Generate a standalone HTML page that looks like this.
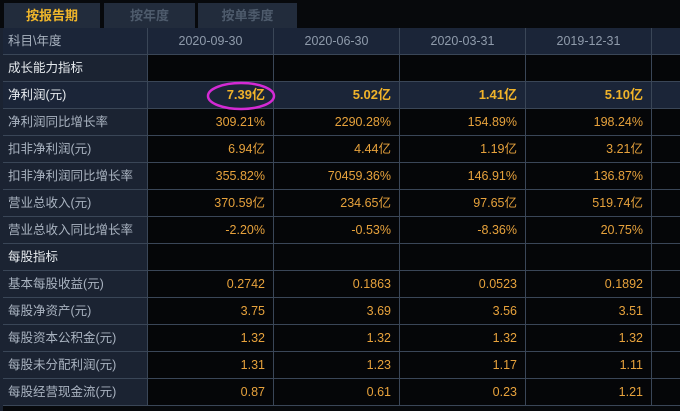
<!DOCTYPE html><html><head><meta charset="utf-8"><style>
body{margin:0;width:680px;height:411px;background:#07090c;overflow:hidden;position:relative;font-family:"Liberation Sans","Noto Sans CJK SC",sans-serif;font-size:12.5px}
.tab{position:absolute;top:3px;height:25px;background:#222c3c;color:#4e5b6c;font-weight:bold;font-size:13px;text-align:center;line-height:25px}
.r{position:absolute;left:3px;width:677px;height:26px;border-bottom:1px solid #3a4657}
.c{position:absolute;top:0;height:26px;line-height:26px;border-right:1px solid #3a4657;box-sizing:border-box}
.l{left:0;width:145px;background:#1b2332;color:#a9b3c0;padding-left:5px}
.d{text-align:right;padding-right:8px;color:#e7a23c;width:126px}
</style></head><body>
<div class="tab" style="left:4px;width:96px;color:#f0b62a">按报告期</div>
<div class="tab" style="left:104px;width:91px">按年度</div>
<div class="tab" style="left:198px;width:99px">按单季度</div>
<div style="position:absolute;top:28px;left:0;width:3px;height:383px;background:#1b2332"></div>
<div id="t"></div>
<svg style="position:absolute;left:0;top:0" width="680" height="411"><ellipse cx="241" cy="96" rx="33" ry="13" fill="none" stroke="#d42ad4" stroke-width="2.5"/></svg>
<script>
var rows=[["科目\\年度","2020-09-30","2020-06-30","2020-03-31","2019-12-31","h"],
["成长能力指标","","","","","s"],
["净利润(元)","7.39亿","5.02亿","1.41亿","5.10亿","n"],
["净利润同比增长率","309.21%","2290.28%","154.89%","198.24%"],
["扣非净利润(元)","6.94亿","4.44亿","1.19亿","3.21亿"],
["扣非净利润同比增长率","355.82%","70459.36%","146.91%","136.87%"],
["营业总收入(元)","370.59亿","234.65亿","97.65亿","519.74亿"],
["营业总收入同比增长率","-2.20%","-0.53%","-8.36%","20.75%"],
["每股指标","","","","","s"],
["基本每股收益(元)","0.2742","0.1863","0.0523","0.1892"],
["每股净资产(元)","3.75","3.69","3.56","3.51"],
["每股资本公积金(元)","1.32","1.32","1.32","1.32"],
["每股未分配利润(元)","1.31","1.23","1.17","1.11"],
["每股经营现金流(元)","0.87","0.61","0.23","1.21"]];
var h="";rows.forEach(function(r,i){var top=28+i*27,t=r[5]||"";
var bg=t=="h"||t=="n"?"#1b2538":"#050608";
h+='<div class="r" style="top:'+top+'px;background:'+bg+'"><div class="c l" style="'+(t=="s"?"color:#e6eaee":"")+(t=="n"?";color:#e6eaee;background:#1b2538":"")+(t=="h"?";background:#1b2538":"")+'">'+r[0]+'</div>';
for(var j=1;j<5;j++){h+='<div class="c d" style="left:'+(145+(j-1)*126)+'px;'+(t=="h"?"text-align:center;padding:0;color:#8f9bab;":"")+(t=="n"?"font-weight:bold;color:#f0b32a;font-size:13px;":"")+'">'+r[j]+'</div>';}
h+='</div>';});
document.getElementById("t").innerHTML=h;
</script>
</body></html>
